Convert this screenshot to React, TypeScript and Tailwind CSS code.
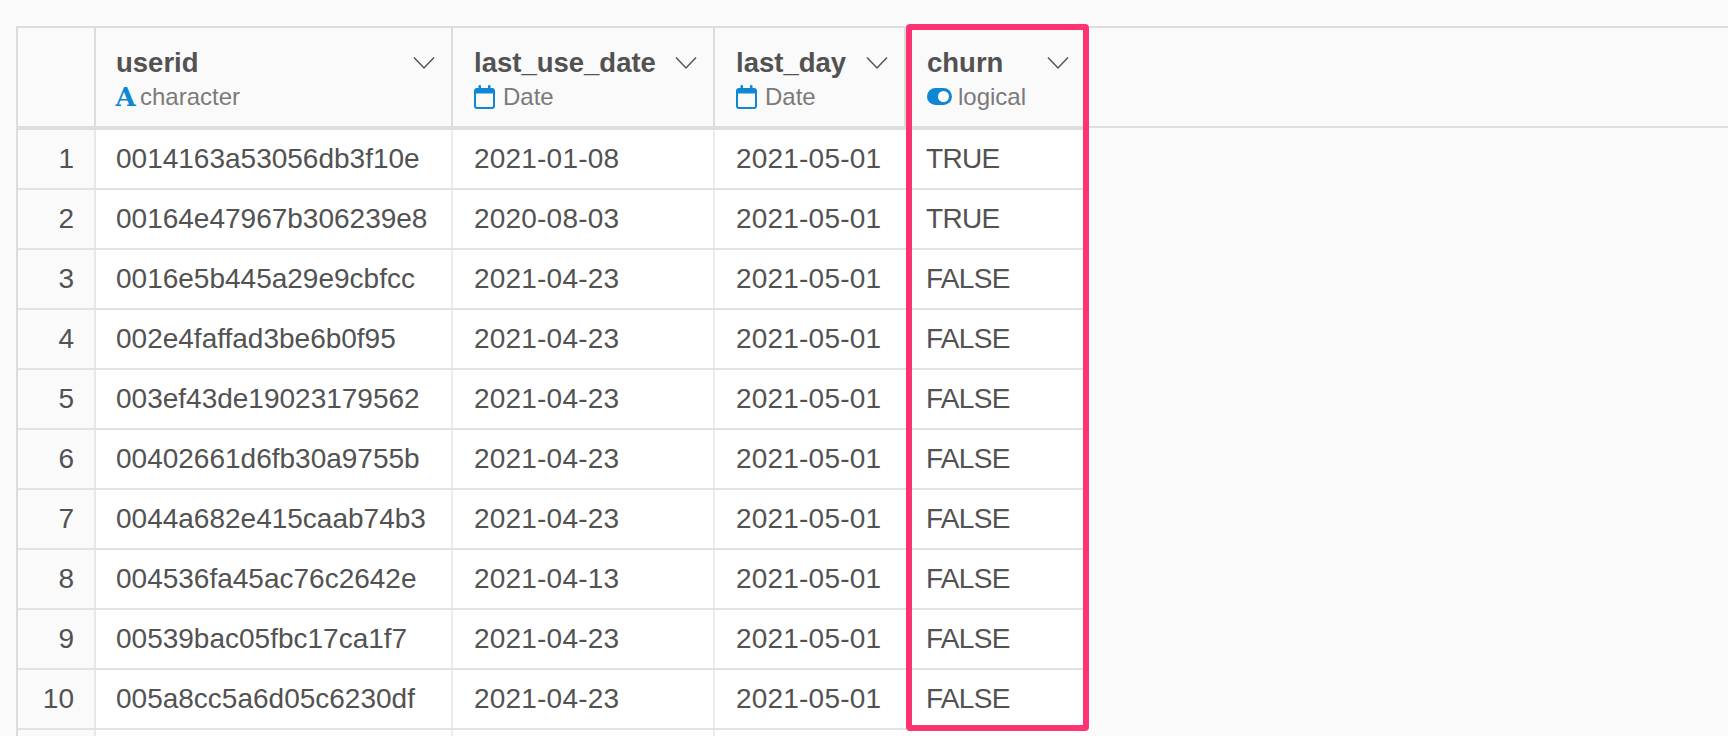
const rows: [string, string, string][] = [
  ["0014163a53056db3f10e", "2021-01-08", "TRUE"],
  ["00164e47967b306239e8", "2020-08-03", "TRUE"],
  ["0016e5b445a29e9cbfcc", "2021-04-23", "FALSE"],
  ["002e4faffad3be6b0f95", "2021-04-23", "FALSE"],
  ["003ef43de19023179562", "2021-04-23", "FALSE"],
  ["00402661d6fb30a9755b", "2021-04-23", "FALSE"],
  ["0044a682e415caab74b3", "2021-04-23", "FALSE"],
  ["004536fa45ac76c2642e", "2021-04-13", "FALSE"],
  ["00539bac05fbc17ca1f7", "2021-04-23", "FALSE"],
  ["005a8cc5a6d05c6230df", "2021-04-23", "FALSE"],
];

function Chevron() {
  return (
    <svg width="22" height="14" viewBox="0 0 22 14" fill="none" className="shrink-0">
      <path d="M1 1.5 L11 12 L21 1.5" stroke="#555555" strokeWidth="1.5" />
    </svg>
  );
}

function Calendar() {
  return (
    <svg width="21" height="24" viewBox="0 0 21 24" fill="none" className="shrink-0">
      <rect x="1" y="4" width="19" height="19" rx="2" stroke="#0f87d3" strokeWidth="2" />
      <rect x="1" y="4" width="19" height="4.5" fill="#0f87d3" />
      <rect x="4.5" y="0" width="2.5" height="5" rx="1" fill="#0f87d3" />
      <rect x="14" y="0" width="2.5" height="5" rx="1" fill="#0f87d3" />
    </svg>
  );
}

function Toggle() {
  return (
    <svg width="25" height="17" viewBox="0 0 25 17" className="shrink-0">
      <rect x="0" y="0" width="25" height="17" rx="8.5" fill="#0f87d3" />
      <circle cx="16.5" cy="8.5" r="5.5" fill="#ffffff" />
    </svg>
  );
}

function HeaderCell({
  name,
  type,
  icon,
  gap,
  className,
}: {
  name: string;
  type: string;
  icon: React.ReactNode;
  gap: string;
  className: string;
}) {
  return (
    <div className={`h-full shrink-0 flex flex-col justify-center pr-[16px] pt-[2px] ${className}`}>
      <div className="flex items-center justify-between h-[36px]">
        <span className="text-[27.5px] font-bold text-[#525252] leading-none">{name}</span>
        <Chevron />
      </div>
      <div className={`flex items-center h-[30px] mt-[1px] ${gap}`}>
        {icon}
        <span className="text-[24px] text-[#7a7a7a] leading-none">{type}</span>
      </div>
    </div>
  );
}

export default function App() {
  return (
    <div
      className="relative h-[736px] overflow-hidden bg-[#fafafa] pt-[26px]"
      style={{ fontFamily: '"Liberation Sans", Arial, sans-serif' }}
    >
      <div className="flex h-[102px] ml-[16px] border-t-2 border-b-2 border-[#dedede]">
        <div className="w-[80px] shrink-0 h-full border-l-2 border-r-2 border-[#dcdcdc]" />
        <HeaderCell
          name="userid"
          type="character"
          gap="gap-[5px]"
          className="w-[357px] pl-[20px] border-r-2 border-[#dcdcdc]"
          icon={
            <span
              className="text-[26px] leading-none font-bold text-[#0f87d3] w-[19px] flex justify-center"
              style={{ fontFamily: '"DejaVu Serif", serif' }}
            >
              A
            </span>
          }
        />
        <HeaderCell
          name="last_use_date"
          type="Date"
          gap="gap-[8px]"
          className="w-[262px] pl-[21px] border-r-2 border-[#dcdcdc]"
          icon={<Calendar />}
        />
        <HeaderCell
          name="last_day"
          type="Date"
          gap="gap-[8px]"
          className="w-[191px] pl-[21px] border-r-2 border-[#dcdcdc]"
          icon={<Calendar />}
        />
        <HeaderCell
          name="churn"
          type="logical"
          gap="gap-[6px]"
          className="w-[179px] pl-[21px]"
          icon={<Toggle />}
        />
      </div>
      <div className="w-[1069px] ml-[16px] border-l-2 border-t-2 border-t-[#dedede] border-l-[#dcdcdc]">
        {[...rows, null].map((row, i) => (
          <div
            key={i}
            className="flex h-[60px] border-b-2 border-[#e3e3e3] text-[28px] text-[#525252] bg-white"
          >
            <div className="w-[78px] shrink-0 bg-[#fafafa] border-r-2 border-[#e8e8e8] flex items-center justify-end pr-[20px]">
              {row ? i + 1 : ""}
            </div>
            <div className="w-[357px] shrink-0 border-r-2 border-[#ececec] flex items-center pl-[20px]">
              {row?.[0]}
            </div>
            <div className="w-[262px] shrink-0 border-r-2 border-[#ececec] flex items-center pl-[21px] tracking-[0.2px]">
              {row?.[1]}
            </div>
            <div className="w-[191px] shrink-0 flex items-center pl-[21px] tracking-[0.2px]">
              {row ? "2021-05-01" : ""}
            </div>
            <div className="w-[179px] shrink-0 flex items-center pl-[20px] tracking-[-0.7px]">{row?.[2]}</div>
          </div>
        ))}
      </div>
      <div className="absolute left-[906px] top-[24px] w-[183px] h-[707px] border-[6px] border-[#ff3372] rounded-[4px]" />
    </div>
  );
}
